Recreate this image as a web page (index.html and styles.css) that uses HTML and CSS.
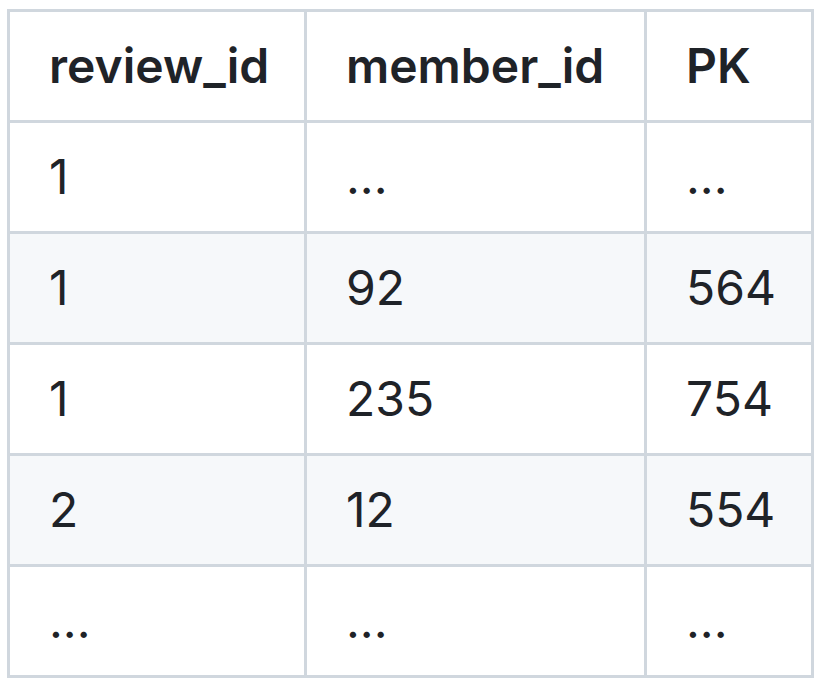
FILE: index.html
```html
<!DOCTYPE html>
<html>
<head>
<meta charset="utf-8">
<link rel="stylesheet" href="styles.css">
</head>
<body>
<table class="md-table">
  <thead>
    <tr><th class="c1">review_id</th><th class="c2">member_id</th><th class="c3">PK</th></tr>
  </thead>
  <tbody>
    <tr><td>1</td><td>...</td><td>...</td></tr>
    <tr><td>1</td><td>92</td><td>564</td></tr>
    <tr><td>1</td><td>235</td><td>754</td></tr>
    <tr><td>2</td><td>12</td><td>554</td></tr>
    <tr><td>...</td><td>...</td><td>...</td></tr>
  </tbody>
</table>
</body>
</html>
```
FILE: styles.css
```css
body {
  margin: 9px 7px;
  background: #ffffff;
  font-family: Inter, "Liberation Sans", sans-serif;
  color: #1f2328;
}
.md-table {
  border-collapse: separate;
  border-spacing: 0;
  table-layout: fixed;
  width: 807px;
  border-top: 3px solid #d0d7de;
  border-left: 3px solid #d0d7de;
  font-size: 48px;
  line-height: 72px;
}
.md-table th,
.md-table td {
  box-sizing: border-box;
  border-right: 3px solid #d0d7de;
  border-bottom: 3px solid #d0d7de;
  padding: 18px 39px 18px 39px;
  text-align: left;
  white-space: nowrap;
}
.md-table th {
  font-weight: 600;
}
.c1 { width: 297px; }
.c2 { width: 340px; }
.c3 { width: 167px; }
.md-table tbody tr:nth-child(2n) {
  background: #f6f8fa;
}
```
